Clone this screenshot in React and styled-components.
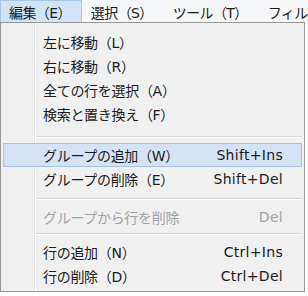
import React from 'react'
import styled, { createGlobalStyle } from 'styled-components'

const GlobalStyle = createGlobalStyle`
    html, body {
        margin: 0;
        padding: 0;
        background: #ffffff;
    }
    body {
        font-family: "DejaVu Sans", "Noto Sans CJK JP", sans-serif;
        color: #1b1b1b;
    }
`

const Frame = styled.div`
    width: 308px;
    height: 296px;
    overflow: hidden;
    background: #ffffff;
`

const MenuBar = styled.nav`
    display: flex;
    height: 22px;
    background: #f5f6f7;
    font-size: 14px;
    letter-spacing: -0.6px;
`

const BarItem = styled.div`
    display: flex;
    align-items: center;
    box-sizing: border-box;
    height: 22px;
    padding: 0 10px 0 8px;
    white-space: nowrap;
    border: 1px solid ${p => (p.$open ? '#a6c6ea' : 'transparent')};
    border-bottom: none;
    background: ${p => (p.$open ? '#d3e4f6' : 'transparent')};
`

const Dropdown = styled.ul`
    list-style: none;
    margin: 0;
    box-sizing: border-box;
    width: 305px;
    padding: 7px 2px 3px;
    border: 1px solid #979797;
    background: linear-gradient(
        to right,
        #f0f0f0 33px,
        #e2e3e3 33px,
        #e2e3e3 34px,
        #ffffff 34px,
        #ffffff 35px,
        #f0f0f0 35px
    );
    font-size: 14px;
`

const Item = styled.li`
    display: grid;
    grid-template-columns: 1fr auto;
    align-items: center;
    box-sizing: border-box;
    height: 24px;
    padding: 0 18px 0 39px;
    border: 1px solid ${p => (p.$hover ? '#a8c3e6' : 'transparent')};
    background: ${p => (p.$hover ? '#d5e3f4' : 'transparent')};
    color: ${p => (p.$disabled ? '#a3a3a3' : '#1b1b1b')};
    white-space: nowrap;
`

const Label = styled.span`
    letter-spacing: -0.3px;
`

const Shortcut = styled.span`
    font-size: 14px;
    letter-spacing: 0.3px;
    text-align: right;
`

const Sep = styled.li`
    height: 1px;
    margin: ${p => p.$top}px 0 5px 33px;
    background: #d7d7d7;
    border-bottom: 1px solid #ffffff;
`

const bar = [
    { label: '編集（E）', open: true },
    { label: '選択（S）' },
    { label: 'ツール（T）' },
    { label: 'フィルタ（I）' },
]

const menu = [
    { label: '左に移動（L）' },
    { label: '右に移動（R）' },
    { label: '全ての行を選択（A）' },
    { label: '検索と置き換え（F）' },
    { sep: 10 },
    { label: 'グループの追加（W）', key: 'Shift+Ins', hover: true },
    { label: 'グループの削除（E）', key: 'Shift+Del' },
    { sep: 7 },
    { label: 'グループから行を削除', key: 'Del', disabled: true },
    { sep: 4 },
    { label: '行の追加（N）', key: 'Ctrl+Ins' },
    { label: '行の削除（D）', key: 'Ctrl+Del' },
]

export default function App() {
    return (
        <Frame>
            <GlobalStyle />
            <MenuBar>
                {bar.map(b => (
                    <BarItem key={b.label} $open={b.open}>{b.label}</BarItem>
                ))}
            </MenuBar>
            <Dropdown>
                {menu.map((m, i) =>
                    m.sep ? (
                        <Sep key={i} $top={m.sep} />
                    ) : (
                        <Item key={i} $hover={m.hover} $disabled={m.disabled}>
                            <Label>{m.label}</Label>
                            <Shortcut>{m.key}</Shortcut>
                        </Item>
                    )
                )}
            </Dropdown>
        </Frame>
    )
}
